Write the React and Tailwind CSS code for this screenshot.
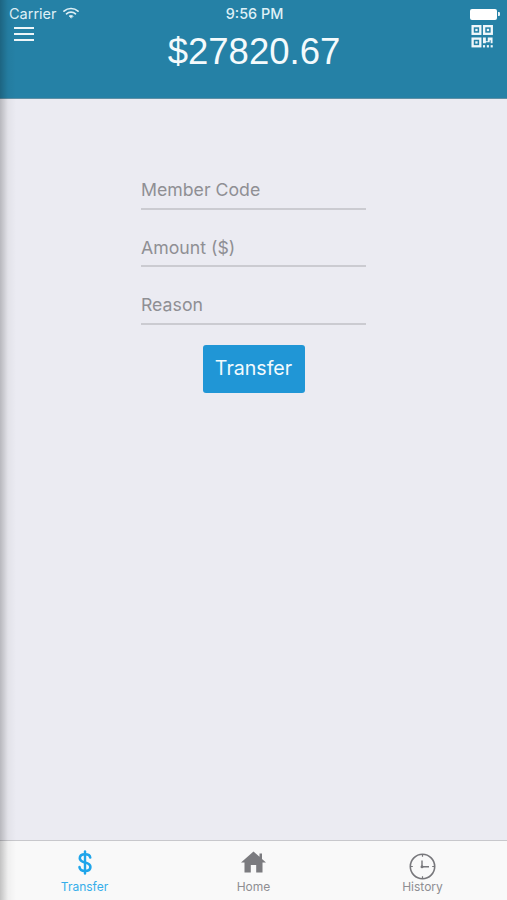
import React from "react";

const sf = { fontFamily: '"Inter", "Liberation Sans", sans-serif' };

function Wifi() {
  return (
    <svg width="16" height="12" viewBox="0 0 16 12" fill="none" stroke="#dff0f6" strokeLinecap="round" strokeWidth="1.7">
      <path d="M1 4.2C5 .6 11 .6 15 4.2" />
      <path d="M3.5 6.8C6 4.6 10 4.6 12.5 6.8" />
      <path d="M8 11l-2-2c1.1-.9 2.9-.9 4 0z" fill="#dff0f6" strokeWidth="0.6" />
    </svg>
  );
}

function Battery() {
  return (
    <div className="flex items-center">
      <div className="w-[27px] h-[11px] bg-white rounded-[2px]" />
      <div className="w-[2px] h-[4px] bg-[#e6f2f7] ml-[1px] rounded-r-[1px]" />
    </div>
  );
}

function Qr() {
  return (
    <svg width="23" height="23" viewBox="0 0 23 24" fill="none">
      <g stroke="#f0f7fa" strokeWidth="2.4">
        <rect x="1.2" y="1.2" width="8" height="8" />
        <rect x="13.2" y="1.2" width="8" height="8" />
        <rect x="1.2" y="14.2" width="8" height="8" />
      </g>
      <g fill="#f0f7fa">
        <rect x="4" y="4" width="2.4" height="2.4" />
        <rect x="16" y="4" width="2.4" height="2.4" />
        <rect x="4" y="17" width="2.4" height="2.4" />
        <path d="M12 13h3v4h2v-4h5v6h-2v-3h-1v2h-4v1h-3v-6z" />
        <rect x="12" y="21" width="2.2" height="2.4" />
        <rect x="16" y="21" width="2.2" height="2.4" />
        <rect x="20" y="21" width="2.2" height="2.4" />
      </g>
    </svg>
  );
}

function DollarIcon() {
  return (
    <svg width="14" height="25" viewBox="0 0 14 25" fill="none" stroke="#1fa5ea" strokeWidth="2.6" strokeLinecap="round">
      <path d="M7 1.5v22" strokeWidth="2.4" />
      <path d="M12.2 7.5C12 5 10 4.2 7 4.2 3.8 4.2 1.8 5.8 1.8 8.2c0 2.6 2.2 3.4 5.2 4.3 3.1.8 5.4 1.7 5.4 4.4 0 2.6-2.2 4-5.4 4-3.1 0-5.2-1.2-5.5-3.8" />
    </svg>
  );
}

function HomeIcon() {
  return (
    <svg width="25" height="22" viewBox="0 0 25 22" fill="#7b7b7f">
      <path d="M12.5 0.5L18.5 5.8V2.5H21V8L25 11.5H21.5V21.5H15.2V14H9.8V21.5H3.5V11.5H0Z" />
    </svg>
  );
}

function ClockIcon() {
  return (
    <svg width="27" height="27" viewBox="0 0 27 27" fill="none" stroke="#77777b">
      <circle cx="13.5" cy="13.5" r="12.2" strokeWidth="1.6" />
      <path d="M13 7.5v6.2h7" strokeWidth="1.4" />
      <circle cx="13" cy="13.7" r="1.5" fill="#77777b" stroke="none" />
      <g strokeWidth="1.2">
        <path d="M13.5 1.8v2M13.5 23.2v2M1.8 13.5h2M23.2 13.5h2" />
      </g>
    </svg>
  );
}

function Field({ label }) {
  return (
    <div className="h-[57.5px] flex items-start pt-[26px] border-b-2 border-[#cbcbd1] box-border">
      <span className="text-[17.7px] leading-[24px] text-[#8f8f94]" style={sf}>{label}</span>
    </div>
  );
}

function Tab({ icon, label, active, shift }) {
  return (
    <div className="flex-1 flex flex-col items-center justify-end pb-[6px]">
      <div className={`h-[34px] flex items-end ${shift}`}>{icon}</div>
      <span className={`text-[12px] leading-[14px] mt-[4px] ${active ? "text-[#35aeea]" : "text-[#8e8e92]"}`} style={sf}>{label}</span>
    </div>
  );
}

export default function App() {
  return (
    <div className="relative w-[507px] h-[900px] flex flex-col overflow-hidden bg-[#ebebf2]">
      <header className="h-[99px] shrink-0 bg-[#2581a6] border-b border-[#5f8fa5] flex flex-col">
        <div className="h-[24px] pt-[4px] pl-[9px] pr-[7px] flex items-center justify-between text-[14px] text-[#dff0f6]" style={sf}>
          <div className="flex-1 flex items-center gap-[6px] -mt-[1px]">
            <span className="leading-[18px] text-[14.5px]">Carrier</span>
            <div className="-mt-[1px]"><Wifi /></div>
          </div>
          <span className="leading-[18px] font-medium text-[14.4px] -mt-[1px]">9:56 PM</span>
          <div className="flex-1 flex justify-end"><Battery /></div>
        </div>
        <div className="flex items-start justify-between pl-[14px] pr-[13px]">
          <div className="flex flex-col gap-[4px] pt-[3px] w-[20px]">
            <div className="h-[2px] bg-[#eef6f9]" />
            <div className="h-[2px] bg-[#eef6f9]" />
            <div className="h-[2px] bg-[#eef6f9]" />
          </div>
          <div className="text-[36.5px] leading-[42px] mt-[7px] text-[#f4fafc] ml-[3px]" style={{ fontFamily: '"Liberation Sans", sans-serif' }}>$27820.67</div>
          <div className="pt-[1px]"><Qr /></div>
        </div>
      </header>

      <main className="flex-1 flex flex-col items-center pt-[53px] bg-[#ebebf2]">
        <div className="w-[225px]">
          <Field label="Member Code" />
          <Field label="Amount ($)" />
          <Field label="Reason" />
        </div>
        <button className="mt-[20px] w-[102px] h-[48px] rounded-[3px] bg-[#2096d6] text-[#f2fafd] text-[19.6px] pt-[1px]" style={sf}>Transfer</button>
      </main>

      <nav className="h-[60px] shrink-0 flex bg-[#f9f9f9] border-t border-[#c8c8cc] px-0">
        <Tab icon={<DollarIcon />} label="Transfer" active shift="pb-[1px]" />
        <Tab icon={<HomeIcon />} label="Home" shift="pb-[3px]" />
        <Tab icon={<div className="-mb-[4px]"><ClockIcon /></div>} label="History" shift="" />
      </nav>

      <div className="absolute inset-y-0 left-0 w-[16px] pointer-events-none bg-gradient-to-r from-[#00000038] via-[#0000000a] to-transparent" />
    </div>
  );
}
